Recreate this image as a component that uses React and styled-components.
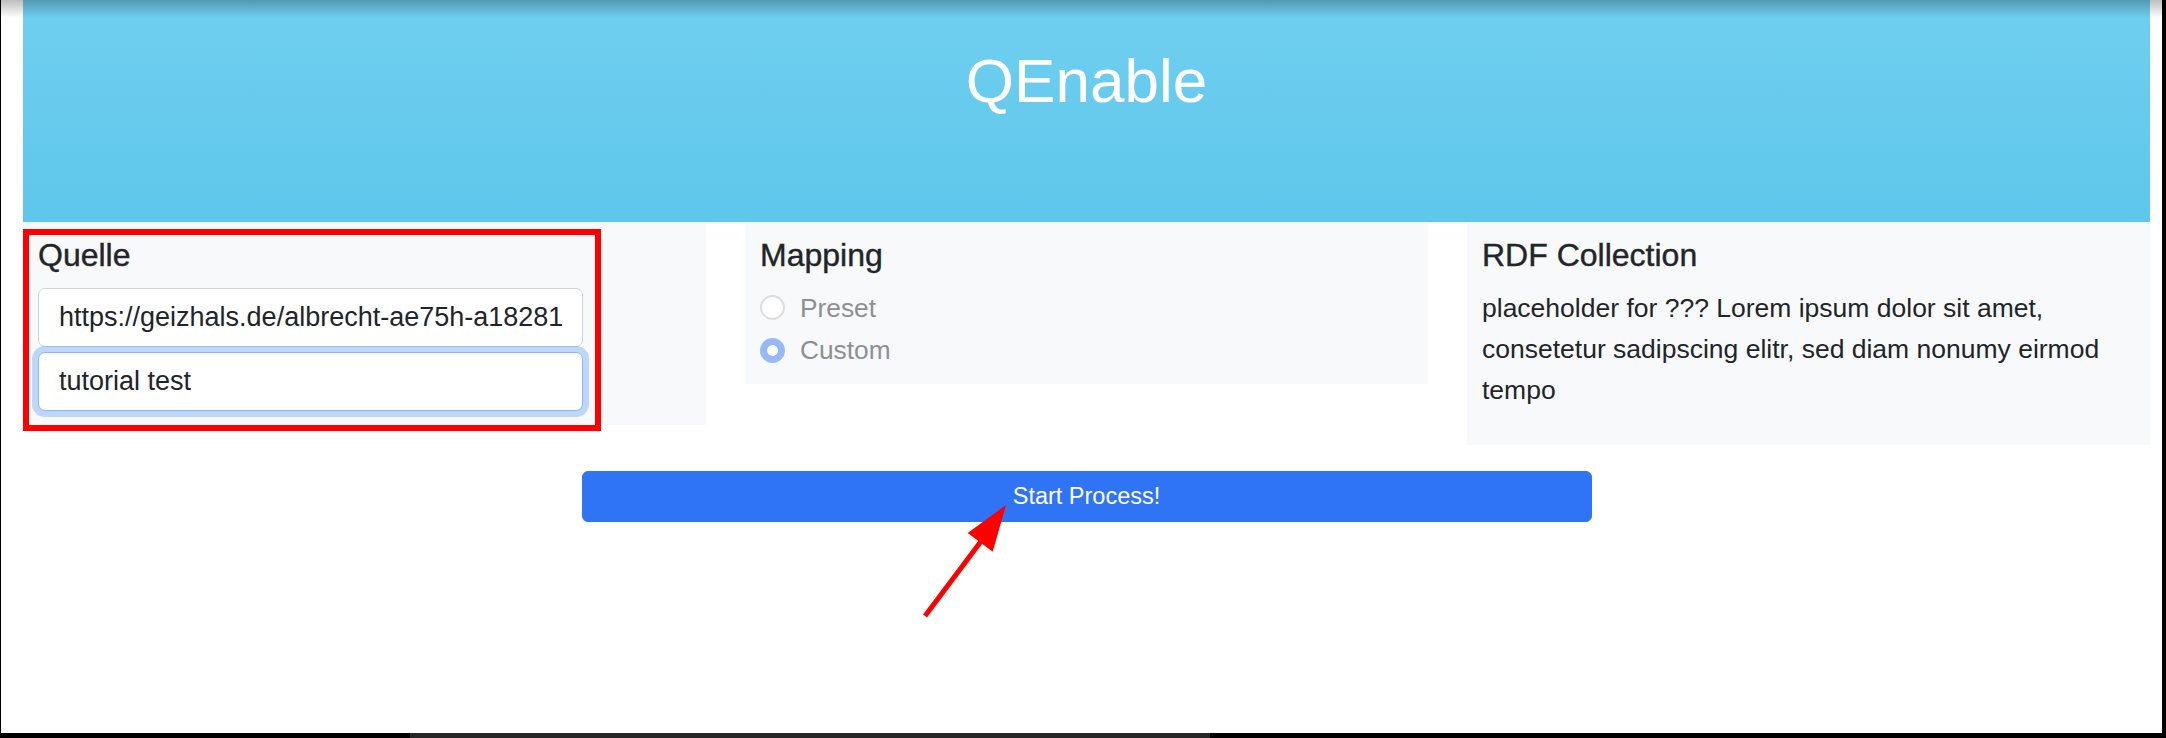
import styled, { createGlobalStyle } from "styled-components";

const FONT = `"Liberation Sans", Arial, Helvetica, sans-serif`;
const TEXT = "#212529";
const PANEL = "#f8f9fa";

const GlobalStyle = createGlobalStyle`
    html, body {
        margin: 0;
        padding: 0;
        background: #000;
        overflow: hidden;
    }
`;

export default function App() {
    return (
        <>
            <GlobalStyle />
            <Screen>
                <TopShade />
                <Page>
                    <Jumbo>
                        <AppTitle>QEnable</AppTitle>
                    </Jumbo>
                    <Columns>
                        <Panel>
                            <PanelTitle>Quelle</PanelTitle>
                            <Form>
                                <TextField readOnly defaultValue="https://geizhals.de/albrecht-ae75h-a18281" />
                                <TextField $focused readOnly defaultValue="tutorial test" />
                            </Form>
                        </Panel>
                        <Panel>
                            <PanelTitle>Mapping</PanelTitle>
                            <RadioList>
                                <RadioRow>
                                    <Radio type="radio" name="mapping" disabled />
                                    <RadioLabel>Preset</RadioLabel>
                                </RadioRow>
                                <RadioRow>
                                    <Radio type="radio" name="mapping" disabled defaultChecked />
                                    <RadioLabel>Custom</RadioLabel>
                                </RadioRow>
                            </RadioList>
                        </Panel>
                        <Panel $bottom={34}>
                            <PanelTitle>RDF Collection</PanelTitle>
                            <Body>
                                placeholder for ??? Lorem ipsum dolor sit amet, consetetur sadipscing elitr, sed diam nonumy eirmod tempo
                            </Body>
                        </Panel>
                    </Columns>
                    <StartButton>Start Process!</StartButton>
                </Page>
                <Highlight />
                <Arrow width="120" height="130" viewBox="0 0 120 130">
                    <line x1="5" y1="121" x2="62" y2="45" stroke="#ff0000" strokeWidth="5" />
                    <polygon points="86,10 47.7,38 72.7,56.7" fill="#ff0000" />
                </Arrow>
            </Screen>
            <Dock>
                <DockBar />
            </Dock>
        </>
    );
}

const Screen = styled.div`
    position: relative;
    box-sizing: border-box;
    width: 2161px;
    height: 733px;
    margin-left: 1px;
    padding: 0 12px 0 22px;
    background: #fff;
    font-family: ${FONT};
    color: ${TEXT};
    overflow: hidden;
`;

const TopShade = styled.div`
    position: absolute;
    top: 0;
    left: 0;
    right: 0;
    height: 18px;
    background: linear-gradient(to bottom, rgba(0, 0, 0, 0.26), rgba(0, 0, 0, 0));
    pointer-events: none;
    z-index: 3;
`;

const Page = styled.div`
    display: flex;
    flex-direction: column;
    align-items: center;
`;

const Jumbo = styled.header`
    box-sizing: border-box;
    width: 100%;
    height: 222px;
    padding-top: 44px;
    background: linear-gradient(to bottom, #70cff0, #5ec7eb);
    text-align: center;
`;

const AppTitle = styled.h1`
    margin: 0;
    font-size: 62px;
    line-height: 74px;
    font-weight: 400;
    color: #fff;
`;

const Columns = styled.div`
    display: grid;
    grid-template-columns: repeat(3, 1fr);
    column-gap: 39px;
    align-items: start;
    width: 100%;
`;

const Panel = styled.section`
    box-sizing: border-box;
    padding: 14px 15px ${p => p.$bottom || 14}px;
    background: ${PANEL};
`;

const PanelTitle = styled.h4`
    margin: 0;
    font-size: 32px;
    line-height: 38px;
    font-weight: 500;
    color: ${TEXT};
    -webkit-text-stroke: 0.4px ${TEXT};
`;

const Form = styled.div`
    margin-top: 14px;
    width: 545px;
`;

const TextField = styled.input`
    display: block;
    box-sizing: border-box;
    width: 100%;
    height: 59px;
    padding: 0 20px;
    font-family: ${FONT};
    font-size: 27px;
    color: ${TEXT};
    background: #fff;
    border: 1.5px solid ${p => (p.$focused ? "#86b7fe" : "#ced4da")};
    border-radius: 7px;
    outline: none;
    box-shadow: ${p => (p.$focused ? "0 0 0 6px rgba(13, 110, 253, 0.25)" : "none")};

    & + & {
        margin-top: 5px;
    }
`;

const RadioList = styled.div`
    display: flex;
    flex-direction: column;
    gap: 2.5px;
    margin-top: 13.5px;
`;

const RadioRow = styled.label`
    display: flex;
    align-items: center;
    gap: 15px;
    height: 40px;
`;

const Radio = styled.input`
    appearance: none;
    box-sizing: border-box;
    width: 25px;
    height: 25px;
    margin: 0;
    border-radius: 50%;
    border: 2px solid #dcdddf;
    background: #fff;

    &:checked {
        border-color: #98b9f9;
        background: radial-gradient(circle, #fff 0 5px, #98b9f9 5.8px);
    }
`;

const RadioLabel = styled.span`
    font-size: 26.3px;
    line-height: 40px;
    color: #8d9093;
`;

const Body = styled.p`
    margin: 14px 0 0;
    font-size: 26.5px;
    line-height: 41px;
    color: ${TEXT};
`;

const StartButton = styled.button`
    width: 1010px;
    height: 51px;
    margin-top: 26px;
    padding: 0;
    font-family: ${FONT};
    font-size: 23.5px;
    color: #fff;
    background: #2f74f5;
    border: 1px solid #2f74f5;
    border-radius: 6px;
`;

const Highlight = styled.div`
    position: absolute;
    left: 22px;
    top: 229px;
    width: 578px;
    height: 202px;
    box-sizing: border-box;
    border: 6px solid #ff0000;
    pointer-events: none;
`;

const Arrow = styled.svg`
    position: absolute;
    left: 919px;
    top: 495px;
    overflow: visible;
`;

const Dock = styled.div`
    height: 5px;
    background: #000;
`;

const DockBar = styled.div`
    width: 800px;
    height: 5px;
    margin-left: 410px;
    background: #262626;
`;
